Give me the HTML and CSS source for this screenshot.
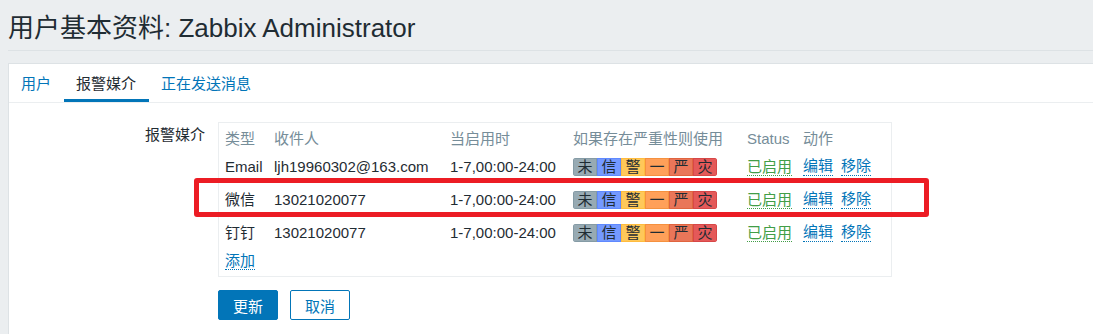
FILE: index.html
```html
<!DOCTYPE html>
<html lang="zh">
<head>
<meta charset="utf-8">
<title>用户基本资料</title>
<link rel="stylesheet" href="styles.css">
</head>
<body>
<header class="page-header">
  <h1 class="page-title">用户基本资料: Zabbix Administrator</h1>
</header>
<main class="panel">
  <nav class="tabs">
    <a class="tab">用户</a>
    <a class="tab tab-active">报警媒介</a>
    <a class="tab">正在发送消息</a>
  </nav>
  <div class="form">
    <div class="form-row">
      <div class="form-label">报警媒介</div>
      <div class="media-box">
        <div class="media-grid">
          <div class="th">类型</div>
          <div class="th">收件人</div>
          <div class="th">当启用时</div>
          <div class="th">如果存在严重性则使用</div>
          <div class="th">Status</div>
          <div class="th">动作</div>

          <div class="td">Email</div>
          <div class="td">ljh19960302@163.com</div>
          <div class="td">1-7,00:00-24:00</div>
          <div class="td"><span class="sev"><i class="s0">未</i><i class="s1">信</i><i class="s2">警</i><i class="s3">一</i><i class="s4">严</i><i class="s5">灾</i></span></div>
          <div class="td"><a class="status">已启用</a></div>
          <div class="td actions"><a class="link">编辑</a><a class="link">移除</a></div>

          <div class="td">微信</div>
          <div class="td">13021020077</div>
          <div class="td">1-7,00:00-24:00</div>
          <div class="td"><span class="sev"><i class="s0">未</i><i class="s1">信</i><i class="s2">警</i><i class="s3">一</i><i class="s4">严</i><i class="s5">灾</i></span></div>
          <div class="td"><a class="status">已启用</a></div>
          <div class="td actions"><a class="link">编辑</a><a class="link">移除</a></div>

          <div class="td">钉钉</div>
          <div class="td">13021020077</div>
          <div class="td">1-7,00:00-24:00</div>
          <div class="td"><span class="sev"><i class="s0">未</i><i class="s1">信</i><i class="s2">警</i><i class="s3">一</i><i class="s4">严</i><i class="s5">灾</i></span></div>
          <div class="td"><a class="status">已启用</a></div>
          <div class="td actions"><a class="link">编辑</a><a class="link">移除</a></div>

          <div class="td add-cell"><a class="link">添加</a></div>
        </div>
      </div>
    </div>
    <div class="buttons">
      <button class="btn btn-primary">更新</button>
      <button class="btn btn-alt">取消</button>
    </div>
  </div>
  <div class="highlight"></div>
</main>
</body>
</html>
```

FILE: styles.css
```css
html, body {
  margin: 0;
  padding: 0;
}
body {
  background: #ebeef0;
  font-family: "Liberation Sans", Arial, "Noto Sans CJK SC", sans-serif;
  font-size: 15px;
  color: #1f2c33;
  height: 334px;
  overflow: hidden;
}
.page-header {
  margin-left: 8px;
  height: 51px;
  border-bottom: 1px solid #dde2e5;
  box-sizing: border-box;
  display: flex;
  align-items: center;
}
.page-title {
  margin: 0;
  font-weight: normal;
  font-size: 26px;
  line-height: 30px;
  padding-top: 5px;
  color: #1f2c33;
}
.panel {
  position: relative;
  margin: 12px 0 0 8px;
  background: #ffffff;
  border-left: 1px solid #dde2e5;
  border-top: 1px solid #dde2e5;
  height: 271px;
  box-sizing: border-box;
}
.tabs {
  display: flex;
  height: 39px;
  border-bottom: 1px solid #ebeef0;
  box-sizing: border-box;
}
.tab {
  padding: 1px 13px 0 12px;
  line-height: 37px;
  color: #0275b8;
  box-sizing: border-box;
  height: 38px;
}
.tab-active {
  color: #1f2c33;
  border-bottom: 3px solid #0275b8;
}
.form {
  padding-top: 19px;
}
.form-row {
  display: flex;
  align-items: flex-start;
}
.form-label {
  width: 196px;
  text-align: right;
  padding-top: 4px;
  line-height: 18px;
  margin-right: 13px;
}
.media-box {
  width: 674px;
  height: 155px;
  border: 1px solid #ebeef0;
  box-sizing: border-box;
  padding: 5px 0 0 6px;
}
.media-grid {
  display: grid;
  grid-template-columns: 49px 176px 123px 174px 56px auto;
  grid-template-rows: 22px 33px 33px 33px 23px;
  align-items: center;
}
.th {
  color: #768d99;
  line-height: 18px;
  white-space: nowrap;
}
.td {
  line-height: 18px;
  white-space: nowrap;
}
.add-cell {
  grid-column: 1 / span 2;
}
.sev {
  display: inline-flex;
  border-radius: 3px;
  overflow: hidden;
  vertical-align: middle;
}
.sev i {
  font-style: normal;
  width: 24px;
  height: 18px;
  box-sizing: border-box;
  text-align: center;
  line-height: 16px;
  border: 1px solid;
  color: #1f2c33;
}
.sev .s0 { background: #97aab3; border-color: #859ba5; }
.sev .s1 { background: #7499ff; border-color: #5f89ff; }
.sev .s2 { background: #ffc859; border-color: #ffbc3f; }
.sev .s3 { background: #ffa059; border-color: #f5913f; }
.sev .s4 { background: #e97659; border-color: #e0643f; }
.sev .s5 { background: #e45959; border-color: #d74747; }
.status {
  color: #429e47;
  border-bottom: 1px dotted #429e47;
}
.link {
  color: #0275b8;
  border-bottom: 1px dotted #0275b8;
}
.actions {
  display: flex;
  gap: 8px;
}
.buttons {
  display: flex;
  gap: 12px;
  margin: 13px 0 0 209px;
}
.btn {
  width: 60px;
  height: 30px;
  border-radius: 2px;
  font-family: "Liberation Sans", Arial, "Noto Sans CJK SC", sans-serif;
  font-size: 15px;
  border: 1px solid #0275b8;
  padding: 0;
}
.btn-primary {
  background: #0275b8;
  color: #ffffff;
}
.btn-alt {
  background: #ffffff;
  color: #0275b8;
}
.highlight {
  position: absolute;
  left: 185px;
  top: 114px;
  width: 735px;
  height: 39px;
  box-sizing: border-box;
  border: 5px solid #ec1c24;
  border-radius: 3px;
  pointer-events: none;
}
```
